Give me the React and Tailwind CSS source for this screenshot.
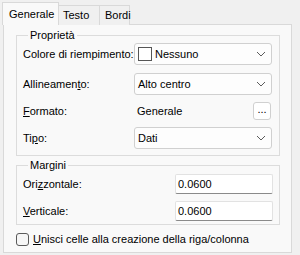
import { useState } from 'react'

const FONT = "font-['Liberation_Sans',Arial,sans-serif]"

function Chevron() {
  return (
    <svg width="10" height="6" viewBox="0 0 10 6" className="shrink-0">
      <polyline points="1,1 5,5 9,1" fill="none" stroke="#5c5c5c" strokeWidth="1" />
    </svg>
  )
}

function Combo({ children }) {
  return (
    <div className="flex-1 h-[22px] flex items-center pl-[3px] pr-[5px] bg-[#fdfdfd] border border-[#d0d0d0] rounded-[3px]">
      <div className="flex-1 flex items-center">{children}</div>
      <Chevron />
    </div>
  )
}

function Row({ label, children, className = '' }) {
  return (
    <div className={`flex items-center ${className}`}>
      <div className="w-[111px] shrink-0">{label}</div>
      {children}
    </div>
  )
}

function TextInput({ value }) {
  return (
    <div className="w-[98px] h-[20px] flex items-center pl-[2px] bg-white border border-[#e2e2e2] border-b-[#8a8a8a] rounded-[2px]">
      {value}
    </div>
  )
}

export default function App() {
  const [tab, setTab] = useState(0)
  const [merge, setMerge] = useState(false)

  return (
    <div className={`w-[300px] h-[255px] bg-[#f0f0f0] pt-[2px] pl-[2px] text-[11px] text-black leading-none select-none ${FONT}`}>
      <div className="flex items-end h-[23px]">
        <div onClick={() => setTab(0)}
          className="relative z-10 h-[23px] w-[57px] pl-[6px] flex items-center border border-b-0 border-[#d9d9d9] bg-[#f9f9f9]">
          Generale
        </div>
        <div onClick={() => setTab(1)}
          className="h-[20px] w-[41px] pl-[4px] flex items-center border-t border-r border-[#d9d9d9] bg-[#f0f0f0]">
          Testo
        </div>
        <div onClick={() => setTab(2)}
          className="h-[20px] w-[30px] pl-[5px] flex items-center border-t border-r border-[#d9d9d9] bg-[#f0f0f0]">
          Bordi
        </div>
      </div>

      <div className="ml-[1px] -mt-px w-[289px] h-[229px] border border-[#d9d9d9] bg-[#f9f9f9] pl-[12px]">
        <fieldset className="mt-[3px] w-[264px] h-[128px] border border-[#dcdcdc] pl-[6px] pr-[7px]">
          <legend className="ml-[5px] px-[2px] leading-[14px]">Proprietà</legend>
          <Row label="Colore di riempimento:" className="mt-[1px]">
            <Combo>
              <span className="w-[14px] h-[14px] border border-[#555] bg-white mr-[3px]" />
              Nessuno
            </Combo>
          </Row>
          <Row label={<>Allineamen<u>t</u>o:</>} className="mt-[8px]">
            <Combo>Alto centro</Combo>
          </Row>
          <Row label={<><u>F</u>ormato:</>} className="mt-[7px] h-[18px]">
            <div className="flex-1 pl-[3px]">Generale</div>
            <button className="w-[18px] h-[18px] mr-[1px] flex items-end justify-center pb-[4px] bg-white border border-[#d0d0d0] rounded-[3px] text-[11px] leading-none">
              ...
            </button>
          </Row>
          <Row label={<>Ti<u>p</u>o:</>} className="mt-[7px]">
            <Combo>Dati</Combo>
          </Row>
        </fieldset>

        <fieldset className="mt-[2px] w-[264px] h-[67px] border border-[#dcdcdc] pl-[6px] pr-[6px]">
          <legend className="ml-[5px] px-[2px] leading-[14px]">Margini</legend>
          <div className="flex items-center mt-[2px]">
            <div className="w-[152px] shrink-0">Ori<u>z</u>zontale:</div>
            <TextInput value="0.0600" />
          </div>
          <div className="flex items-center mt-[7px]">
            <div className="w-[152px] shrink-0"><u>V</u>erticale:</div>
            <TextInput value="0.0600" />
          </div>
        </fieldset>

        <label className="mt-[8px] flex items-center h-[13px]" onClick={() => setMerge(m => !m)}>
          <span className="w-[13px] h-[13px] border border-[#5a5a5a] rounded-[3px] bg-[#f6f6f6] flex items-center justify-center">
            {merge && <span className="w-[7px] h-[7px] bg-[#333]" />}
          </span>
          <span className="ml-[4px]"><u>U</u>nisci celle alla creazione della riga/colonna</span>
        </label>
      </div>
    </div>
  )
}
